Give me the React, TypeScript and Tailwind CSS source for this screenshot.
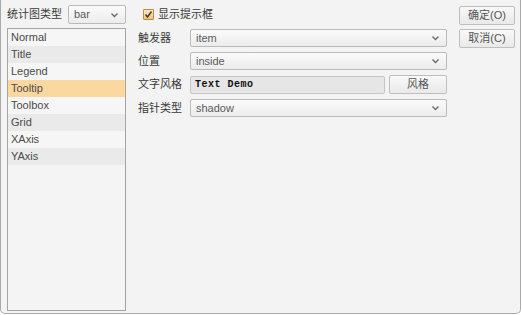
import React from "react";

const items = ["Normal", "Title", "Legend", "Tooltip", "Toolbox", "Grid", "XAxis", "YAxis"];

const rowBg = (i: number) => {
  if (i === 3) return "bg-[#fbd89f]";
  return i % 2 === 1 ? "bg-[#e9eae9]" : "bg-[#f5f6f5]";
};

const Chevron = () => (
  <svg width="9" height="6" viewBox="0 0 9 6" fill="none" stroke="#6b6b6b" strokeWidth="1.4">
    <polyline points="1.5 1.5 4.5 4.5 7.5 1.5" />
  </svg>
);

const Select = ({ value, className = "" }: { value: string; className?: string }) => (
  <div
    className={`flex items-center justify-between h-[18px] border border-[#b9bab9] rounded-[2px] bg-gradient-to-b from-[#fbfbfb] to-[#ececec] pl-[5px] pr-[6px] ${className}`}
  >
    <span className="text-[11px] text-[#5a5a5a]">{value}</span>
    <Chevron />
  </div>
);

const Button = ({ label, className = "" }: { label: string; className?: string }) => (
  <div
    className={`flex items-center justify-center border border-[#bdbebd] rounded-[2px] bg-gradient-to-b from-[#f9f9f9] to-[#e8e9e8] text-[11px] text-[#555] ${className}`}
  >
    {label}
  </div>
);

export default function App() {
  return (
    <div
      className="w-[522px] h-[315px] bg-white"
      style={{ fontFamily: '"Liberation Sans", "Noto Sans CJK SC", sans-serif' }}
    >
      <div className="w-[521px] h-[314px] bg-[#f2f3f2] border-l border-r border-b border-[#a9aaa9] rounded-b-[5px] flex pl-[6px] pt-[5px]">
        {/* left */}
        <div className="w-[119px] flex flex-col">
          <div className="flex items-center justify-between h-[19px]">
            <span className="text-[11px] text-[#3a3a3a]">统计图类型</span>
            <Select value="bar" className="w-[58px] h-[19px]" />
          </div>
          <div className="mt-[4px] h-[283px] border border-[#a4a5a4] bg-[#f3f4f3] flex flex-col">
            {items.map((it, i) => (
              <div key={it} className={`h-[17px] flex items-center pl-[3px] text-[11px] text-[#4a4a4a] ${rowBg(i)}`}>
                {it}
              </div>
            ))}
          </div>
        </div>

        {/* middle */}
        <div className="ml-[12px] w-[309px] flex flex-col">
          <div className="h-[19px] flex items-center pl-[5px] gap-[4px]">
            <div className="w-[11px] h-[11px] border border-[#c08a3c] rounded-[1px] bg-gradient-to-b from-[#fde7c2] to-[#f4c479] flex items-center justify-center">
              <svg width="9" height="9" viewBox="0 0 9 9" fill="none" stroke="#3d3d3d" strokeWidth="1.5">
                <polyline points="1.5 4.5 3.5 7 7.5 1.5" />
              </svg>
            </div>
            <span className="text-[11px] text-[#3a3a3a]">显示提示框</span>
          </div>
          <div className="mt-[5px] flex flex-col gap-[5px]">
            <div className="flex items-center">
              <span className="w-[52px] text-[11px] text-[#3a3a3a]">触发器</span>
              <Select value="item" className="flex-1" />
            </div>
            <div className="flex items-center">
              <span className="w-[52px] text-[11px] text-[#3a3a3a]">位置</span>
              <Select value="inside" className="flex-1" />
            </div>
            <div className="flex items-center">
              <span className="w-[52px] text-[11px] text-[#3a3a3a]">文字风格</span>
              <div className="w-[195px] h-[18px] border border-[#c4c5c4] rounded-[2px] bg-[#e5e6e5] flex items-center pl-[4px]">
                <span
                  className="text-[10px] font-bold text-[#111] tracking-[0.5px]"
                  style={{ fontFamily: '"Liberation Mono", monospace' }}
                >
                  Text Demo
                </span>
              </div>
              <Button label="风格" className="ml-[4px] w-[58px] h-[19px]" />
            </div>
            <div className="flex items-center">
              <span className="w-[52px] text-[11px] text-[#3a3a3a]">指针类型</span>
              <Select value="shadow" className="flex-1" />
            </div>
          </div>
        </div>

        {/* right */}
        <div className="ml-[12px] pt-[1px] flex flex-col gap-[4px]">
          <Button label="确定(O)" className="w-[56px] h-[19px]" />
          <Button label="取消(C)" className="w-[56px] h-[19px]" />
        </div>
      </div>
    </div>
  );
}
